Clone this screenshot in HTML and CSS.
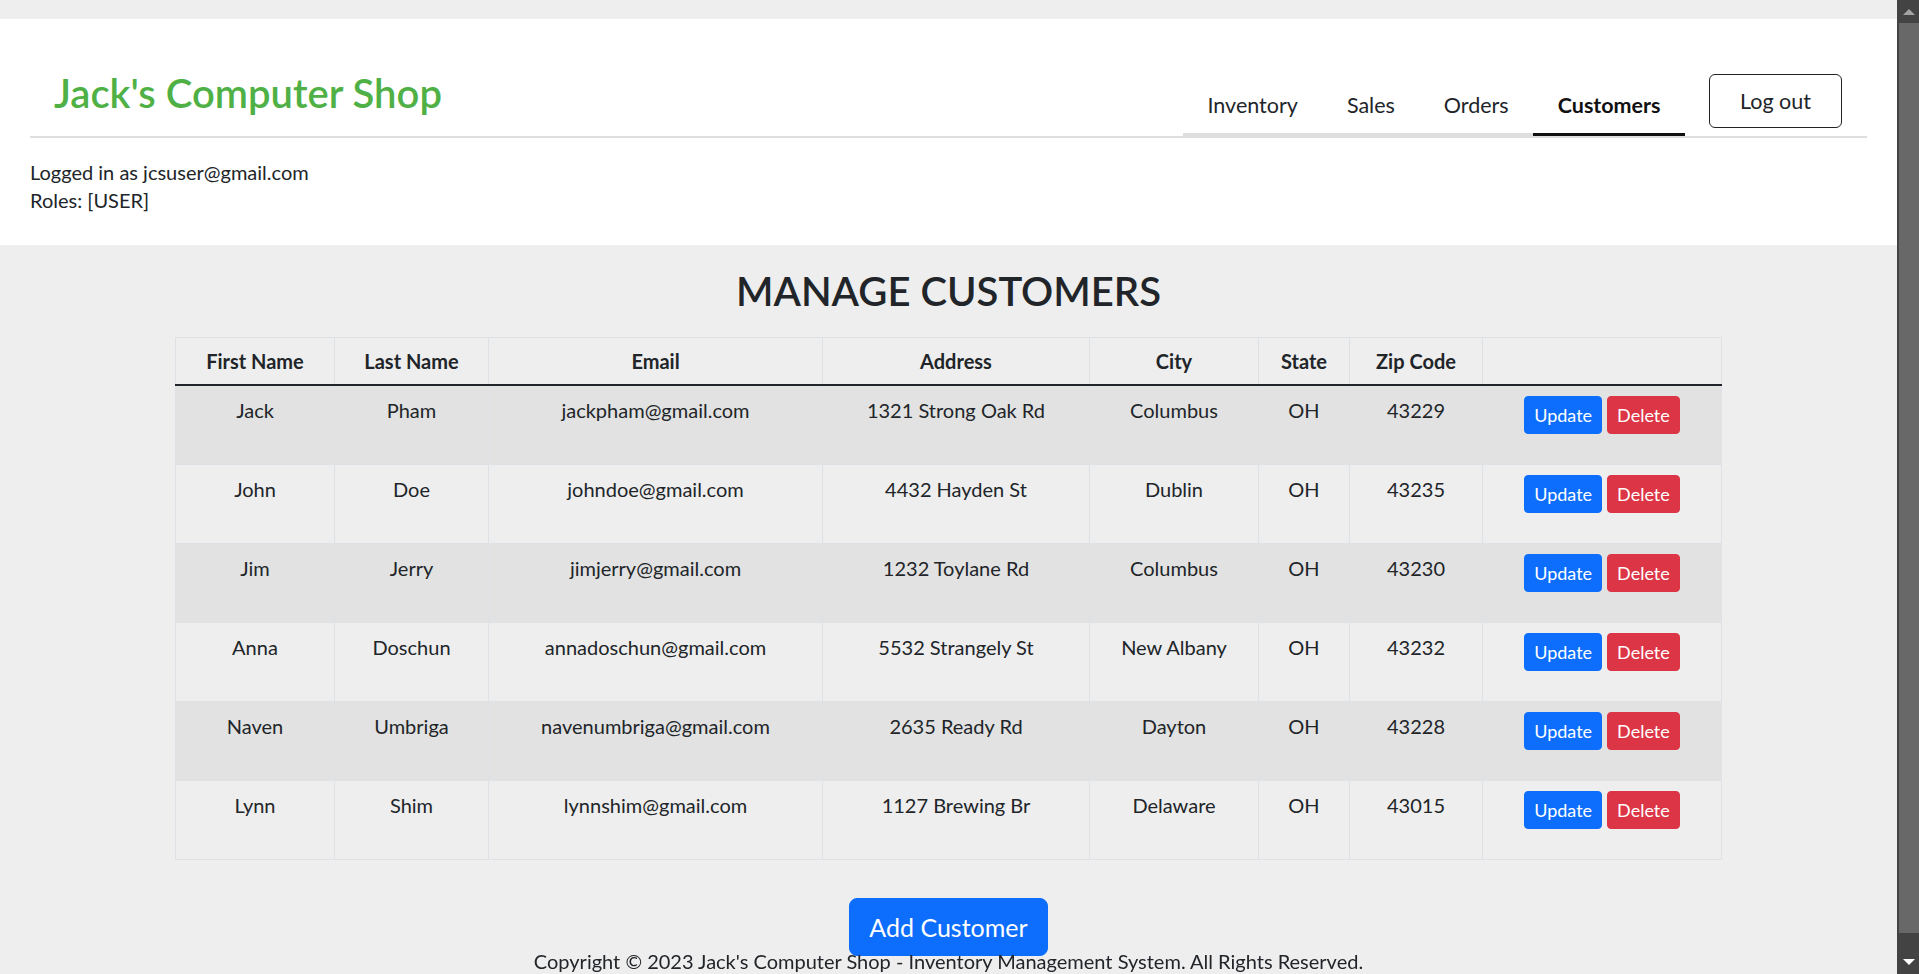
FILE: index.html
```html
<!DOCTYPE html>
<html lang="en">
<head>
<meta charset="utf-8">
<title>Manage Customers - Jack's Computer Shop</title>
<link rel="stylesheet" href="styles.css">
</head>
<body>
<div class="page">
  <header class="site-header">
    <div class="topbar">
      <h1 class="brand">Jack's Computer Shop</h1>
      <div class="topbar-right">
        <nav class="nav">
          <a class="nav-link" href="#">Inventory</a>
          <a class="nav-link" href="#">Sales</a>
          <a class="nav-link" href="#">Orders</a>
          <a class="nav-link active" href="#">Customers</a>
        </nav>
        <button class="btn-logout" type="button">Log out</button>
      </div>
    </div>
    <div class="user-info">
      <div>Logged in as jcsuser@gmail.com</div>
      <div>Roles: [USER]</div>
    </div>
  </header>

  <main class="main">
    <h2 class="page-title">MANAGE CUSTOMERS</h2>
    <table class="customers">
      <colgroup>
        <col class="c-first"><col class="c-last"><col class="c-email"><col class="c-address">
        <col class="c-city"><col class="c-state"><col class="c-zip"><col class="c-actions">
      </colgroup>
      <thead>
        <tr>
          <th>First Name</th><th>Last Name</th><th>Email</th><th>Address</th>
          <th>City</th><th>State</th><th>Zip Code</th><th></th>
        </tr>
      </thead>
      <tbody>
        <tr>
          <td>Jack</td><td>Pham</td><td>jackpham@gmail.com</td><td>1321 Strong Oak Rd</td>
          <td>Columbus</td><td>OH</td><td>43229</td>
          <td class="actions"><div class="actions-wrap"><button class="btn btn-update">Update</button><button class="btn btn-delete">Delete</button></div></td>
        </tr>
        <tr>
          <td>John</td><td>Doe</td><td>johndoe@gmail.com</td><td>4432 Hayden St</td>
          <td>Dublin</td><td>OH</td><td>43235</td>
          <td class="actions"><div class="actions-wrap"><button class="btn btn-update">Update</button><button class="btn btn-delete">Delete</button></div></td>
        </tr>
        <tr>
          <td>Jim</td><td>Jerry</td><td>jimjerry@gmail.com</td><td>1232 Toylane Rd</td>
          <td>Columbus</td><td>OH</td><td>43230</td>
          <td class="actions"><div class="actions-wrap"><button class="btn btn-update">Update</button><button class="btn btn-delete">Delete</button></div></td>
        </tr>
        <tr>
          <td>Anna</td><td>Doschun</td><td>annadoschun@gmail.com</td><td>5532 Strangely St</td>
          <td>New Albany</td><td>OH</td><td>43232</td>
          <td class="actions"><div class="actions-wrap"><button class="btn btn-update">Update</button><button class="btn btn-delete">Delete</button></div></td>
        </tr>
        <tr>
          <td>Naven</td><td>Umbriga</td><td>navenumbriga@gmail.com</td><td>2635 Ready Rd</td>
          <td>Dayton</td><td>OH</td><td>43228</td>
          <td class="actions"><div class="actions-wrap"><button class="btn btn-update">Update</button><button class="btn btn-delete">Delete</button></div></td>
        </tr>
        <tr>
          <td>Lynn</td><td>Shim</td><td>lynnshim@gmail.com</td><td>1127 Brewing Br</td>
          <td>Delaware</td><td>OH</td><td>43015</td>
          <td class="actions"><div class="actions-wrap"><button class="btn btn-update">Update</button><button class="btn btn-delete">Delete</button></div></td>
        </tr>
      </tbody>
    </table>
    <div class="add-row">
      <button class="btn-add" type="button">Add Customer</button>
    </div>
  </main>

  <footer class="footer">Copyright © 2023 Jack's Computer Shop - Inventory Management System. All Rights Reserved.</footer>
</div>

<div class="scrollbar" aria-hidden="true">
  <div class="scroll-up"></div>
  <div class="scroll-thumb"></div>
  <div class="scroll-down"></div>
</div>
</body>
</html>
```

FILE: styles.css
```css
html, body {
  margin: 0;
  height: 100%;
  overflow: hidden;
}

body {
  font-family: Lato, "Noto Sans", sans-serif;
  color: #212529;
  background: #eeeeee;
}

.page {
  width: calc(100% - 22px);
}

/* ---------- header ---------- */
.site-header {
  background: #ffffff;
  margin-top: 19px;
  padding: 0 30px 31px;
}

.topbar {
  display: flex;
  justify-content: space-between;
  align-items: flex-end;
  height: 117px;
  border-bottom: 2px solid #dedede;
}

.brand {
  margin: 0 0 19px 24px;
  font-size: 40px;
  line-height: 48px;
  font-weight: 600;
  color: #4fb145;
}

.topbar-right {
  display: flex;
  align-items: flex-end;
}

.nav {
  display: flex;
}

.nav-link {
  font-size: 21.5px;
  line-height: 32px;
  padding: 0 24.5px 12px;
  border-bottom: 3px solid #dedede;
  color: #212529;
  text-decoration: none;
}

.nav-link.active {
  font-weight: 700;
  color: #111111;
  border-bottom-color: #111111;
}

.btn-logout {
  margin: 0 25px 8px 24px;
  font-family: Lato, "Noto Sans", sans-serif;
  font-size: 21.5px;
  line-height: 32px;
  padding: 10px 30px;
  border: 1px solid #222222;
  border-radius: 6px;
  background: #ffffff;
  color: #212529;
}

.user-info {
  margin-top: 20px;
  font-size: 20px;
  line-height: 28px;
}

/* ---------- main ---------- */
.page-title {
  margin: 22px 0 22px;
  text-align: center;
  font-size: 40px;
  line-height: 48px;
  font-weight: 600;
  color: #212529;
}

.customers {
  width: 1546px;
  margin: 0 auto;
  border-collapse: collapse;
  table-layout: fixed;
  font-size: 20px;
  line-height: 30px;
}

.c-first { width: 159px; }
.c-last { width: 154px; }
.c-email { width: 334px; }
.c-address { width: 267px; }
.c-city { width: 169px; }
.c-state { width: 91px; }
.c-zip { width: 133px; }
.c-actions { width: 239px; }

.customers th,
.customers td {
  border: 1px solid #dee2e6;
  padding: 8px;
  text-align: center;
  vertical-align: top;
}

.customers tbody td {
  padding-top: 9px;
}

.customers thead th {
  font-weight: 700;
  border-bottom: 2px solid #212529;
}

.customers tbody tr {
  height: 79px;
}

.customers tbody tr:nth-child(odd) td {
  background: #e2e2e2;
}

.customers tbody td.actions {
  padding-top: 10px;
}

.actions-wrap {
  display: flex;
  justify-content: center;
  gap: 5px;
}

.btn {
  font-family: Lato, "Noto Sans", sans-serif;
  font-size: 18px;
  line-height: 28px;
  padding: 4px 9px;
  border: 1px solid transparent;
  border-radius: 4px;
  color: #ffffff;
}

.btn-update {
  background: #0d6efd;
  border-color: #0d6efd;
}

.btn-delete {
  background: #dc3545;
  border-color: #dc3545;
}

.add-row {
  margin-top: 38px;
  text-align: center;
}

.btn-add {
  font-family: Lato, "Noto Sans", sans-serif;
  font-size: 25px;
  line-height: 38px;
  padding: 9px 19px;
  border: 1px solid #0d6efd;
  border-radius: 8px;
  background: #0d6efd;
  color: #ffffff;
}

.footer {
  position: fixed;
  left: 0;
  bottom: 0;
  width: calc(100% - 22px);
  text-align: center;
  font-size: 20px;
  line-height: 26px;
  color: #212529;
}

/* ---------- fake window scrollbar ---------- */
.scrollbar {
  position: fixed;
  top: 0;
  right: 0;
  width: 22px;
  height: 100%;
  background: #434343;
}

.scroll-thumb {
  position: absolute;
  left: 2px;
  right: 0;
  top: 23px;
  bottom: 41px;
  background: #686868;
}

.scroll-up,
.scroll-down {
  position: absolute;
  left: 6px;
  width: 0;
  height: 0;
  border-left: 6px solid transparent;
  border-right: 6px solid transparent;
}

.scroll-up {
  top: 9px;
  border-bottom: 6px solid #a3a3a3;
}

.scroll-down {
  bottom: 9px;
  border-top: 6px solid #ffffff;
}
```
